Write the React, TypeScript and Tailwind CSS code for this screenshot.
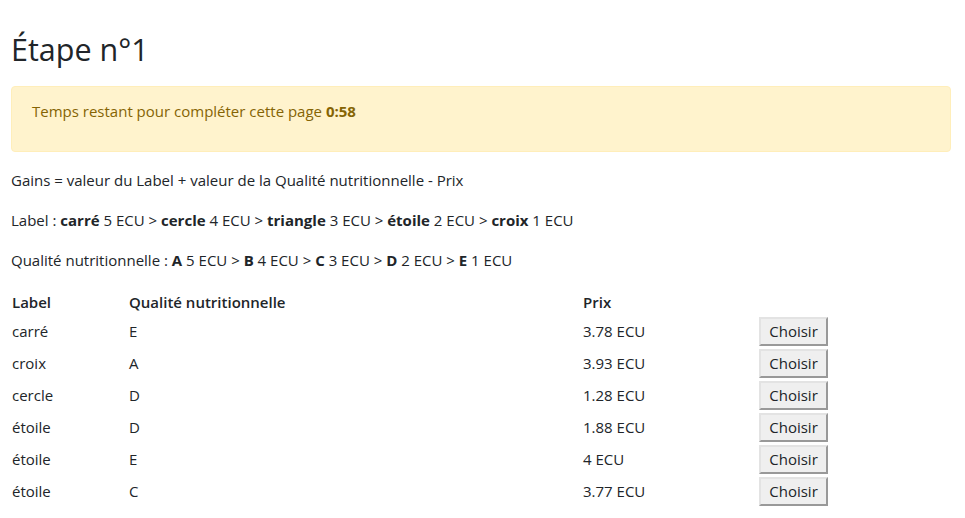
import React from 'react';

const rows = [
  { label: 'carré', quality: 'E', price: '3.78 ECU' },
  { label: 'croix', quality: 'A', price: '3.93 ECU' },
  { label: 'cercle', quality: 'D', price: '1.28 ECU' },
  { label: 'étoile', quality: 'D', price: '1.88 ECU' },
  { label: 'étoile', quality: 'E', price: '4 ECU' },
  { label: 'étoile', quality: 'C', price: '3.77 ECU' },
];

export default function App() {
  return (
    <div className="min-h-screen bg-white pl-[11px] pr-[14px] text-[15px] leading-6 text-[#212529] [font-family:'Open_Sans',sans-serif]">
      <h2 className="pt-[30px] pb-[18px] text-[30.5px] leading-[38px]">Étape n°1</h2>

      <div className="mb-4 rounded border border-[#ffeeba] bg-[#fff3cd] px-5 py-3 text-[#856404]">
        <p className="mb-4">
          Temps restant pour compléter cette page <b>0:58</b>
        </p>
      </div>

      <p className="mb-4">Gains = valeur du Label + valeur de la Qualité nutritionnelle - Prix</p>
      <p className="mb-4">
        Label : <b>carré</b> 5 ECU &gt; <b>cercle</b> 4 ECU &gt; <b>triangle</b> 3 ECU &gt; <b>étoile</b> 2 ECU &gt;{' '}
        <b>croix</b> 1 ECU
      </p>
      <p className="mb-4">
        Qualité nutritionnelle : <b>A</b> 5 ECU &gt; <b>B</b> 4 ECU &gt; <b>C</b> 3 ECU &gt; <b>D</b> 2 ECU &gt; <b>E</b> 1 ECU
      </p>

      <div className="flex flex-col">
        <div className="flex h-[27px] items-center pl-px font-semibold">
          <div className="w-[117px]">Label</div>
          <div className="w-[454px]">Qualité nutritionnelle</div>
          <div className="w-[176px]">Prix</div>
        </div>
        {rows.map((r, i) => (
          <div key={i} className="flex h-8 items-center pl-px">
            <div className="w-[117px]">{r.label}</div>
            <div className="w-[454px]">{r.quality}</div>
            <div className="w-[176px]">{r.price}</div>
            <button className="h-[29px] w-[69px] border-2 border-t-[#e3e3e3] border-l-[#e3e3e3] border-b-[#999] border-r-[#999] bg-[#efefef] text-[15px]">
              Choisir
            </button>
          </div>
        ))}
      </div>
    </div>
  );
}
